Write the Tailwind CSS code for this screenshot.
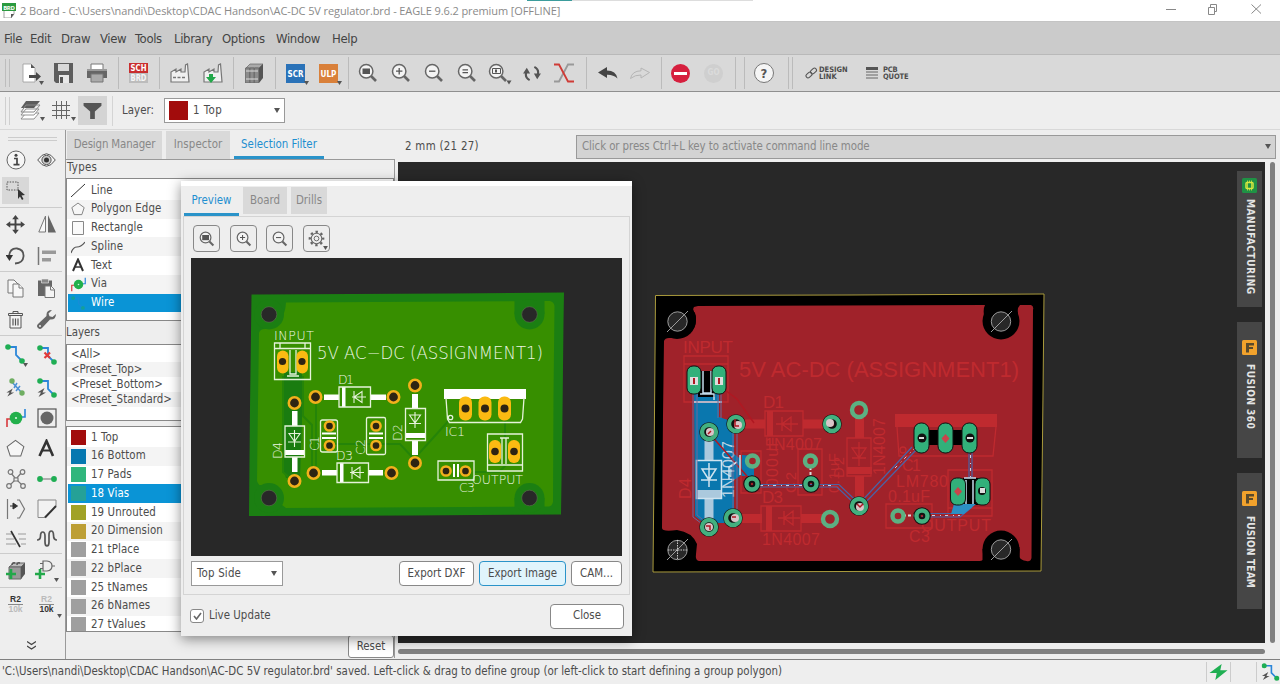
<!DOCTYPE html>
<html lang="en">
<head>
<meta charset="utf-8">
<title>2 Board - EAGLE</title>
<script src="https://cdn.jsdelivr.net/npm/@tailwindcss/browser@4"></script>
</head>
<body class="w-[1280px] h-[684px] overflow-hidden bg-[#eeeeee] font-['DejaVu_Sans_Condensed','DejaVu_Sans',sans-serif] text-[11.4px] leading-none tracking-[0.030px] text-[#4c4c4c]">

<!-- shared symbols -->
<svg class="hidden">
  <symbol id="mag" viewBox="0 0 20 20"><path d="M13 13l5 5" stroke="#666" stroke-width="2.6"/><circle cx="8.2" cy="8.2" r="6.7" fill="#f4f4f4" stroke="#666" stroke-width="1.5"/></symbol>
  <symbol id="dn" viewBox="0 0 6 5"><path d="M0 0h6L3 5z" fill="#555"/></symbol>
  <symbol id="polygon" viewBox="0 0 20 20"><path d="M10 1.5L18.8 8l-3.3 10h-11L1.2 8z" fill="#f6f6f6" stroke="#666" stroke-width="1.1"/></symbol>
  <symbol id="via" viewBox="0 0 20 20"><path d="M1 19v-8h5" fill="none" stroke="#d8383c" stroke-width="1.6"/><path d="M19 1v8h-5" fill="none" stroke="#2b86d9" stroke-width="1.6"/><circle cx="10" cy="10" r="6.300" fill="#22b04b"/><circle cx="10" cy="10" r="1.100" fill="#d7f5df"/></symbol>
  <symbol id="wire" viewBox="0 0 20 20"><path d="M3 3h8v8l6 6" fill="none" stroke="#2b86d9" stroke-width="1.8"/><circle cx="3" cy="3" r="2.8" fill="#1fae54"/><circle cx="17" cy="17" r="2.8" fill="#1fae54"/></symbol>
  <symbol id="bolt" viewBox="0 0 20 20"><path d="M15 1L1 10h7l-5 9 15-9h-7z" fill="#555"/></symbol>
</svg>

<div class="relative flex flex-col w-[1280px] h-[684px]">

  <!-- title bar -->
  <div class="relative h-[22px] shrink-0 bg-white border-b border-[#c4c4c4] flex items-center px-[2px] font-['Open_Sans','Noto_Sans',sans-serif] text-[11px] tracking-[-0.100px] text-[#8a8a8a]">
    <svg class="w-[14px] h-[16px] mb-[2px]" viewBox="0 0 14 16"><path d="M2 8h10v4l-3 4H2z" fill="#fff" stroke="#888" stroke-width=".8"/><path d="M9 16v-4h3z" fill="#555"/><rect width="14" height="8" y="1" fill="#2a9a3f"/><text x="1.2" y="7.6" font-size="6" font-weight="700" fill="#fff" textLength="11.6">BRD</text></svg>
    <span class="ml-[4px] whitespace-nowrap">2 Board - C:\Users\nandi\Desktop\CDAC Handson\AC-DC 5V regulator.brd - EAGLE 9.6.2 premium [OFFLINE]</span>
    <div class="absolute left-[527px] top-0 w-[45px] h-[1px] bg-[#3b9c9c]"></div>
    <div class="absolute left-[572px] top-0 w-[181px] h-[1px] bg-[#ddd]"></div>
    <svg class="ml-auto mr-[15px] mb-[3px] w-[98px] h-[14px]" viewBox="0 0 98 14" fill="none" stroke="#888"><path d="M1 7.500h10M43.500 5.500h6v7h-6zM45.500 5.500v-3h6v7h-2M86.500 2.500l9.500 9M96 2.500l-9.500 9"/></svg>
  </div>

  <!-- menu -->
  <div class="h-[33px] shrink-0 bg-[#cbcbcb] border-b border-[#b9b9b9] flex items-center pl-[4px] text-[13px] tracking-[-0.350px] text-[#444]">
    <span class="w-[26px]">File</span><span class="w-[31px]">Edit</span><span class="w-[39px]">Draw</span><span class="w-[35px]">View</span><span class="w-[39px]">Tools</span><span class="w-[48px]">Library</span><span class="w-[54px]">Options</span><span class="w-[56px]">Window</span><span>Help</span>
  </div>

  <!-- main toolbar -->
  <div class="h-[37px] shrink-0 bg-[#d9d9d9] border-b border-[#8f8f8f] flex items-center">
    <div class="ml-[5px] w-[5px] h-[28px] border-x border-[#bdbdbd]"></div>
    <div class="ml-[5px] h-[32px] w-[104px] border-r border-[#bbb] flex items-center">
      <div class="w-[33px] flex justify-center"><svg class="w-[26px] h-[24px]" viewBox="0 0 26 24"><path d="M4 3h8l4 4v14H4z" fill="#fff" stroke="#999" stroke-width=".8"/><path d="M12 3l4 4h-4z" fill="#555"/><path d="M10 14h7v-3l5 4.500-5 4.500v-3h-7z" fill="#4a4a4a"/><path d="M20 20h5l-2.500 4z" fill="#555"/></svg></div>
      <div class="w-[32px] flex justify-center"><svg class="w-[20px] h-[20px]" viewBox="0 0 20 20"><path d="M0 0h19v20H2l-2-2z" fill="#5d5d5d"/><path d="M4 1h11v7H4z" fill="#d9d9d9"/><path d="M5 12h10v8H5z" fill="#e8e8e8"/><path d="M6 14h3v6H6z" fill="#555"/></svg></div>
      <div class="w-[33px] flex justify-center"><svg class="w-[20px] h-[20px]" viewBox="0 0 20 20"><path d="M4 1h12v6H4z" fill="#fff" stroke="#777"/><path d="M0 7h20v8H0z" fill="#666"/><path d="M0 6h20v2H0z" fill="#999"/><path d="M4 11h12v8H4z" fill="#aaa" stroke="#777"/></svg></div>
    </div>
    <div class="h-[32px] w-[41px] border-r border-[#bbb] flex items-center justify-center pr-px"><svg class="w-[19px] h-[20px]" viewBox="0 0 19 20"><rect width="19" height="10" fill="#c92e2e"/><rect y="10" width="19" height="10" fill="#bcbcbc"/><text x="1.500" y="8.300" font-size="8.500" font-weight="700" fill="#fff" textLength="16" lengthAdjust="spacingAndGlyphs">SCH</text><text x="1.500" y="18.300" font-size="8.500" font-weight="700" fill="#f5f5f5" textLength="16" lengthAdjust="spacingAndGlyphs">BRD</text></svg></div>
    <div class="h-[32px] w-[74px] border-r border-[#bbb] flex items-center pl-[3px]">
      <div class="w-[33px] flex justify-center"><svg class="w-[20px] h-[20px]" viewBox="0 0 20 20"><path d="M1 19V9l5-3v3l5-3v3h4l.5-7 2-1 1.500 18z" fill="#f0f0f0" stroke="#777" stroke-width="1.200"/><path d="M3 14.500h13" stroke="#777" stroke-width="1.500" stroke-dasharray="3 1.500"/></svg></div>
      <div class="w-[33px] flex justify-center"><svg class="w-[20px] h-[20px]" viewBox="0 0 20 20"><path d="M1 19V9l5-3v3l5-3v3h4l.5-7 2-1 1.500 18z" fill="#f0f0f0" stroke="#777" stroke-width="1.200"/><path d="M6 11h4v3h3l-5 6-5-6h3z" fill="#22a84a"/></svg></div>
    </div>
    <div class="h-[32px] w-[42px] border-r border-[#bbb] flex items-center justify-center pr-[2px]"><svg class="w-[18px] h-[20px]" viewBox="0 0 18 20"><path d="M1 5l4-4h13l-4 4z" fill="#aaa" stroke="#666" stroke-width=".7"/><path d="M14 5l4-4v14l-4 5z" fill="#555"/><path d="M.500 5h4v15h-4zM5 5h4v15H5zM9.500 5h4v15h-4z" fill="#8c8c8c" stroke="#666" stroke-width=".8"/><path d="M1 8h12M1 16h12" stroke="#ddd"/></svg></div>
    <div class="h-[32px] w-[73px] border-r border-[#bbb] flex items-center pl-[3px]">
      <div class="w-[34px] flex justify-center"><svg class="w-[26px] h-[24px]" viewBox="0 0 26 24"><rect x="3" y="3" width="19" height="19" fill="#2a72b8"/><text x="4.500" y="16" font-size="9.500" font-weight="700" fill="#fff" textLength="16" lengthAdjust="spacingAndGlyphs">SCR</text><path d="M21 20h5l-2.500 4z" fill="#555"/></svg></div>
      <div class="w-[32px] flex justify-center"><svg class="w-[26px] h-[24px]" viewBox="0 0 26 24"><rect x="3" y="3" width="19" height="19" fill="#d9803a"/><text x="4.500" y="16" font-size="9.500" font-weight="700" fill="#fff" textLength="16" lengthAdjust="spacingAndGlyphs">ULP</text><path d="M21 20h5l-2.500 4z" fill="#555"/></svg></div>
    </div>
    <div class="h-[32px] w-[238px] border-r border-[#bbb] flex items-center pl-[3px]">
      <div class="w-[32.800px] flex justify-center"><svg class="w-[20px] h-[20px]" viewBox="0 0 20 20"><use href="#mag"/><path d="M4.500 5.500h7.500v5.500H4.500z" fill="#555"/></svg></div>
      <div class="w-[32.800px] flex justify-center"><svg class="w-[20px] h-[20px]" viewBox="0 0 20 20"><use href="#mag"/><path d="M5 8.200h6.400M8.200 5v6.400" stroke="#555" stroke-width="1.300"/></svg></div>
      <div class="w-[32.800px] flex justify-center"><svg class="w-[20px] h-[20px]" viewBox="0 0 20 20"><use href="#mag"/><path d="M5 8.200h6.400" stroke="#555" stroke-width="1.300"/></svg></div>
      <div class="w-[32.800px] flex justify-center"><svg class="w-[20px] h-[20px]" viewBox="0 0 20 20"><use href="#mag"/><path d="M5.500 6.800h5.500M5.500 9.600h5.500" stroke="#555" stroke-width="1.300"/></svg></div>
      <div class="w-[32.800px] flex justify-center"><svg class="w-[25px] h-[23px]" viewBox="0 0 25 23"><use href="#mag" x="1" y="1" width="20" height="20"/><path d="M5.500 6.500h8v5h-8z" fill="none" stroke="#555"/><path d="M8 7.500h2v3H8z" fill="#555"/><path d="M19.500 18.500h5l-2.500 4z" fill="#555"/></svg></div>
      <div class="w-[32px] flex justify-center"><svg class="w-[18px] h-[17px]" viewBox="0 0 19 18" fill="none" stroke="#555" stroke-width="2.200"><path d="M7 16Q1 13 4 6M12 2q6 3 3 10M4 3"/><path d="M0 9l4-6 3.500 6zM19 9l-4 6-3.500-6z" fill="#555" stroke="none"/></svg></div>
      <div class="w-[32px] flex justify-center"><svg class="w-[20px] h-[20px]" viewBox="0 0 20 20" fill="none" stroke-width="1.800"><path d="M0 18.500h5L14 1.500h6" stroke="#999"/><path d="M0 1.500h5L14 18.500h6" stroke="#cf3b36"/></svg></div>
    </div>
    <div class="h-[32px] w-[75px] border-r border-[#bbb] flex items-center pl-[4px]">
      <div class="w-[33px] flex justify-center"><svg class="w-[20px] h-[13px]" viewBox="0 0 20 13"><path d="M0 5.500L9 0v3.500q9 0 10.500 8Q15 7.500 9 7.800V11z" fill="#444"/></svg></div>
      <div class="w-[32px] flex justify-center"><svg class="w-[20px] h-[13px]" viewBox="0 0 20 13"><path d="M19.500 5.500L11 1v2.800Q2 4 .500 11.500 5 7.800 11 8v3z" fill="none" stroke="#b5b5b5"/></svg></div>
    </div>
    <div class="h-[32px] w-[74px] border-r border-[#bbb] flex items-center pl-[2px]">
      <div class="w-[33px] flex justify-center"><div class="size-[19px] rounded-full bg-[#d61f3e] flex items-center justify-center"><div class="w-[13px] h-[3px] bg-white"></div></div></div>
      <div class="w-[33px] flex justify-center"><div class="size-[19px] rounded-full bg-[#cfcfcf] flex items-center justify-center text-[8px] font-bold text-[#dbdbdb]">GO</div></div>
    </div>
    <div class="ml-[8px] h-[32px] w-[45px] border-x border-[#bbb] flex items-center pl-[9px]"><div class="size-[20px] rounded-full border border-[#777] bg-[#f5f5f5] flex items-center justify-center text-[13px] font-bold text-[#555]">?</div></div>
    <div class="ml-[3px] h-[32px] w-px bg-[#bbb]"></div>
    <svg class="ml-[12px] w-[13px] h-[12px]" viewBox="0 0 13 12" fill="none" stroke="#555" stroke-width="1.100"><rect x="-3.300" y="-2" width="6.600" height="4" rx="2" transform="translate(4 8) rotate(-42)"/><rect x="-3.300" y="-2" width="6.600" height="4" rx="2" transform="translate(8.500 4) rotate(-42)"/></svg>
    <div class="ml-[1px] w-[47px] text-[7.500px] leading-[7px] font-bold text-[#4c4c4c] tracking-[0px]">DESIGN<br>LINK</div>
    <svg class="w-[12px] h-[12px]" viewBox="0 0 12 12"><path d="M0 0h12v3H0z" fill="#555"/><path d="M0 5h12M0 8h12M0 11h12" stroke="#666"/></svg>
    <div class="ml-[5px] text-[7.500px] leading-[7px] font-bold text-[#4c4c4c] tracking-[-0.150px]">PCB<br>QUOTE</div>
  </div>

  <!-- layer toolbar -->
  <div class="h-[38px] shrink-0 bg-[#eeeeee] border-b border-[#d8d8d8] flex items-center">
    <div class="ml-[5px] w-[5px] h-[28px] border-x border-[#cfcfcf]"></div>
    <svg class="ml-[10px] w-[27px] h-[24px]" viewBox="0 0 27 24"><g fill="#fff" stroke="#888" stroke-width=".9"><path d="M6 14h13l-5 6H1z"/><path d="M6 10h13l-5 6H1z"/></g><path d="M6 2h14l-6 7H1z" fill="#5c5c5c"/><path d="M6 6h14l-6 7H1z" fill="none" stroke="#888"/><path d="M20 18h5l-2.500 4z" fill="#555"/></svg>
    <svg class="ml-[4px] w-[25px] h-[24px]" viewBox="0 0 25 24"><path d="M1 6.500h18M1 11.500h18M1 16.500h18M5.500 2v18M10.500 2v18M15.500 2v18" stroke="#666"/><path d="M20 18h5l-2.500 4z" fill="#555"/></svg>
    <div class="ml-[2px] w-[29px] h-[29px] bg-[#d4d4d4] flex items-center justify-center"><svg class="w-[19px] h-[16px]" viewBox="0 0 19 17"><path d="M0 0h19v3l-7 6v8H7V9L0 3z" fill="#555"/></svg></div>
    <div class="ml-[5px] h-[30px] w-px bg-[#d4d4d4]"></div>
    <span class="ml-[9px] w-[42px]">Layer:</span>
    <div class="w-[121px] h-[25px] bg-white border border-[#999] flex items-center pl-[4px] pr-[4px]"><div class="size-[19px] bg-[#a20c0c]"></div><span class="ml-[5px] tracking-[0.450px]">1 Top</span><svg class="ml-auto w-[6px] h-[5px]"><use href="#dn"/></svg></div>
  </div>

  <!-- work area -->
  <div class="h-[529px] shrink-0 flex">

    <!-- tool palette -->
    <div class="w-[65px] shrink-0 flex flex-col bg-[#eeeeee]">
      <div class="mt-[7px] ml-[8px] w-[49px] h-[4px] border-y border-[#ccc] mb-[5px]"></div>
      <div class="grid grid-cols-2 w-[62px] h-[62px] pt-px place-items-center border-b border-[#ccc]">
        <svg class="w-[20px] h-[20px]" viewBox="0 0 20 20"><circle cx="10" cy="10" r="9" fill="#f6f6f6" stroke="#666"/><path d="M8 8.500h3v6M7.500 14.700h6" stroke="#444" stroke-width="1.700" fill="none"/><circle cx="10" cy="5.200" r="1.500" fill="#444"/></svg>
        <svg class="w-[19px] h-[14px]" viewBox="0 0 19 14"><path d="M.7 7Q9.500-5.500 18.300 7 9.500 19.500.7 7z" fill="#f4f4f4" stroke="#555"/><circle cx="9.500" cy="7" r="4.600" fill="#ccc" stroke="#555"/><circle cx="9.500" cy="7" r="2.500" fill="#333"/></svg>
        <div class="size-[27px] bg-[#d8d8d8] flex items-center justify-center"><svg class="w-[19px] h-[20px]" viewBox="0 0 19 20"><path d="M1 2h11v8H1z" fill="none" stroke="#555" stroke-dasharray="1.500 1.200"/><path d="M12 9l7 6-3.500.5 2 3.500-1.500 1-2-3.500-2 2.500z" fill="#333"/></svg></div>
      </div>
      <div class="grid grid-cols-2 w-[62px] h-[64px] place-items-center border-b border-[#ccc]">
        <svg class="w-[19px] h-[19px]" viewBox="0 0 20 20"><path d="M10 0l3.500 4.500H11V9h4.500V6.500L20 10l-4.500 3.500V11H11v4.500h2.500L10 20l-3.500-4.500H9V11H4.500v2.500L0 10l4.500-3.500V9H9V4.500H6.500z" fill="#444"/></svg>
        <svg class="w-[18px] h-[18px]" viewBox="0 0 18 18"><path d="M7.500 1v16H.8z" fill="#f8f8f8" stroke="#777"/><path d="M10 0v17.500h8z" fill="#666"/></svg>
        <svg class="w-[19px] h-[18px]" viewBox="0 0 19 18"><path d="M3 9Q4 1 11 1.500q7 1 6.500 8Q17 16 9 16.500" fill="none" stroke="#555" stroke-width="1.800"/><path d="M-.5 8h7.500L3.500 14z" fill="#333"/></svg>
        <svg class="w-[20px] h-[18px]" viewBox="0 0 20 18"><path d="M1.500 0v18" stroke="#777" stroke-width="1.500"/><path d="M5 3.500h14v3.500H5zM5 11h9v3.500H5z" fill="#999"/></svg>
      </div>
      <div class="grid grid-cols-2 w-[62px] h-[64px] pt-px place-items-center border-b border-[#ccc]">
        <svg class="w-[17px] h-[19px]" viewBox="0 0 17 19" fill="#f7f7f7" stroke="#777"><path d="M1 1h6l4 4v9H1z"/><path d="M6 5h6l4 4v9H6z"/><path d="M12 5v4h4"/></svg>
        <svg class="w-[17px] h-[19px]" viewBox="0 0 17 19"><path d="M0 1.500h14V17H0z" fill="#666"/><path d="M3.500 0h7v4h-7z" fill="#888" stroke="#eee" stroke-width=".6"/><path d="M7 7h6l3.500 3.500V18.500H7z" fill="#f4f4f4" stroke="#777"/><path d="M12.500 7v4h4" fill="none" stroke="#777"/></svg>
        <svg class="w-[15px] h-[18px]" viewBox="0 0 15 18" fill="none" stroke="#555"><path d="M.5 4.500v-2h14v2zM5 2V.500h5V2"/><path d="M2 5v12h11V5" fill="#f4f4f4"/><path d="M5 7.500v7M7.500 7.500v7M10 7.500v7" stroke-width="1.200"/></svg>
        <svg class="w-[19px] h-[19px]" viewBox="0 0 19 19"><path d="M15 0q-6 0-5.500 6L1 14q-2 2 0 4t4 0l8-8.500q6 .5 6-5.500l-3.500 3-3-.8L11.500 3.500z" fill="#666"/><circle cx="3" cy="16" r="1" fill="#eee"/></svg>
      </div>
      <div class="grid grid-cols-2 w-[62px] h-[218px] pt-[2px] place-items-center border-b border-[#ccc]">
        <svg class="w-[24px] h-[24px]" viewBox="0 0 24 24"><use href="#wire" x="1" y="1" width="20" height="20"/><path d="M19 20h5l-2.500 4z" fill="#555"/></svg>
        <svg class="w-[20px] h-[20px]" viewBox="0 0 20 20"><use href="#wire"/><path d="M7.500 7.500l5.500 5.500M13 7.500L7.500 13" stroke="#e03a3a" stroke-width="2.200"/></svg>
        <svg class="w-[20px] h-[20px]" viewBox="0 0 20 20"><path d="M5 3l11 12M11 5l-3 5M14 8l-4 5" stroke="#4b8fd4" stroke-width="1.500"/><circle cx="6" cy="3" r="2.700" fill="#6fae62"/><circle cx="16" cy="15" r="2.700" fill="#6fae62"/><use href="#bolt" x="0" y="9" width="9" height="11"/></svg>
        <svg class="w-[20px] h-[20px]" viewBox="0 0 20 20"><use href="#wire"/><use href="#bolt" x="0" y="9" width="10" height="11"/></svg>
        <svg class="w-[20px] h-[20px]"><use href="#via"/></svg>
        <svg class="w-[20px] h-[20px]" viewBox="0 0 20 20"><rect x="1" y="1" width="18" height="18" fill="#eee" stroke="#555" stroke-width="1.200"/><circle cx="10" cy="10" r="6.500" fill="#666"/></svg>
        <svg class="w-[19px] h-[19px]"><use href="#polygon"/></svg>
        <svg class="w-[17px] h-[18px]" viewBox="0 0 17 18" fill="none" stroke="#333"><path d="M1.500 17L8.500 2l6.500 15" stroke-width="2.600"/><path d="M4 11.500h9" stroke-width="2"/></svg>
        <svg class="w-[20px] h-[20px]" viewBox="0 0 20 20" fill="#eee" stroke="#777" stroke-width="1.200"><path d="M4 3l6 7 6-7M3 17l7-7 7 7" fill="none"/><circle cx="4.500" cy="3" r="2.300"/><circle cx="16.500" cy="3" r="2.300"/><circle cx="3" cy="17" r="2.300"/><circle cx="17" cy="17" r="2.300"/><path d="M8 9h4v3H8z"/></svg>
        <svg class="w-[20px] h-[6px]" viewBox="0 0 20 6"><path d="M3 3h14" stroke="#999" stroke-width="1.500"/><circle cx="3" cy="3" r="2.900" fill="#1fae54"/><circle cx="17" cy="3" r="2.900" fill="#1fae54"/></svg>
        <svg class="w-[20px] h-[20px]" viewBox="0 0 20 20"><path d="M1.500 0v20M11 1h2.500l5 9-5 9H11" fill="none" stroke="#777" stroke-width="1.200"/><path d="M4 7h5M7 4l4.500 3L7 10z" fill="#333" stroke="#333"/></svg>
        <svg class="w-[20px] h-[20px]" viewBox="0 0 20 20"><path d="M1 1h18v6L8 18.500H1z" fill="#f2f2f2" stroke="#888"/><path d="M19 7L8 18.500" stroke="#333" stroke-width="2"/></svg>
        <svg class="w-[20px] h-[18px]" viewBox="0 0 20 18"><path d="M0 4h7M12 4h8M0 9h8M13 9h7M0 14h10M15 14h5" stroke="#999" stroke-width="1.200"/><path d="M5 1l9 16" stroke="#333" stroke-width="1.700"/></svg>
        <svg class="w-[20px] h-[18px]" viewBox="0 0 20 18"><path d="M0 10q3.500 0 3.500-4t2.200-4T8 6v6q0 4 2 4t2-4V5q0-4 2.200-4t2.300 4q0 5 3.500 5" fill="none" stroke="#555" stroke-width="1.700"/></svg>
      </div>
      <div class="grid grid-cols-2 w-[62px] h-[34px] place-items-center border-b border-[#ccc]">
        <svg class="w-[20px] h-[20px]" viewBox="0 0 20 20"><path d="M3 6l5-4h11l-4 4z" fill="#bbb" stroke="#666"/><path d="M3 6h12v12H3z" fill="#999" stroke="#666"/><path d="M15 6l4-4v11l-4 5z" fill="#555"/><path d="M6 4q0-3 3-2M11 4q0-3 3-2" fill="none" stroke="#555" stroke-width="1.500"/><path d="M0 13h10M5 8v10" stroke="#22a84a" stroke-width="2.600"/></svg>
        <svg class="w-[24px] h-[22px]" viewBox="0 0 24 22"><path d="M8 1h4q5 .5 5 5t-5 5H8zM5 3.500h3M5 8.500h3M17 6h3" fill="none" stroke="#666" stroke-width="1.200"/><path d="M0 14h10M5 9v10" stroke="#22a84a" stroke-width="2.600"/><path d="M19 18h5l-2.500 4z" fill="#555"/></svg>
      </div>
      <div class="grid grid-cols-2 w-[62px] h-[32px] place-items-center font-['Liberation_Sans',sans-serif] text-[8.500px] font-bold text-[#333] leading-[9px] text-center tracking-normal">
        <div>R2<div class="border-t border-[#888] text-[#bbb]">10k</div></div>
        <div class="relative"><div class="text-[#bbb] border-b border-[#888]">R2</div>10k<svg class="absolute -right-[8px] -bottom-[4px] w-[5px] h-[4px]"><use href="#dn"/></svg></div>
      </div>
      <svg class="mt-[21px] ml-[27px] w-[9px] h-[9px]" viewBox="0 0 9 9" fill="none" stroke="#444" stroke-width="1.200"><path d="M0 .500l4.500 3L9 .500M0 5l4.500 3L9 5"/></svg>
    </div>

    <!-- side panel -->
    <div class="w-[330px] shrink-0 flex flex-col border-l border-[#9a9a9a]">
      <div class="h-[29px] flex items-end text-[#888] tracking-[-0.150px]">
        <div class="ml-[1px] w-[95px] h-[28px] bg-[#d9d9d9] flex items-center justify-center">Design Manager</div>
        <div class="ml-[4px] w-[64px] h-[28px] bg-[#d9d9d9] flex items-center justify-center tracking-[0.100px]">Inspector</div>
        <div class="ml-[4px] w-[90px] h-[29px] border-b-[3px] border-[#2a93c9] pt-[4px] flex items-center justify-center text-[#1e8fd0] tracking-[0px]">Selection Filter</div>
      </div>
      <div class="h-[499px] border-t border-r border-[#999] flex flex-col">
        <div class="h-[18px] flex items-center pb-[2px] pl-px tracking-[0.300px]">Types</div>
        <div class="h-[143px] border border-[#888] bg-white pt-[2px] tracking-[0.100px]">
          <div class="h-[18.750px] flex items-center pl-[4px]"><svg class="w-[14px] h-[14px] mr-[6px]" viewBox="0 0 14 14"><path d="M0 14L14 1" stroke="#333"/></svg>Line</div>
          <div class="h-[18.750px] flex items-center pl-[4px] bg-[#f4f4f4]"><svg class="w-[14px] h-[14px] mr-[6px]"><use href="#polygon"/></svg>Polygon Edge</div>
          <div class="h-[18.750px] flex items-center pl-[4px]"><svg class="w-[14px] h-[14px] mr-[6px]" viewBox="0 0 14 14"><path d="M1.500.500h11v13h-11z" fill="#fafafa" stroke="#888"/></svg>Rectangle</div>
          <div class="h-[18.750px] flex items-center pl-[4px] bg-[#f4f4f4]"><svg class="w-[14px] h-[14px] mr-[6px]" viewBox="0 0 14 14"><path d="M0 13Q2 7 6 7t8-5" fill="none" stroke="#555" stroke-width="1.200"/></svg>Spline</div>
          <div class="h-[18.750px] flex items-center pl-[4px]"><svg class="w-[14px] h-[14px] mr-[6px]" viewBox="0 0 14 14" fill="none" stroke="#333"><path d="M2 13L7 1.500 12 13" stroke-width="2"/><path d="M4 9h6" stroke-width="1.500"/></svg>Text</div>
          <div class="h-[18.750px] flex items-center pl-[4px] bg-[#f4f4f4]"><svg class="w-[15px] h-[15px] mr-[5px]"><use href="#via"/></svg>Via</div>
          <div class="h-[18.750px] flex items-center ml-[1px] pl-[3px] bg-[#0a94d6] text-white"><svg class="w-[14px] h-[14px] mr-[6px] opacity-45"><use href="#wire"/></svg>Wire</div>
        </div>
        <div class="h-[23px] flex items-center tracking-[0px]">Layers</div>
        <div class="h-[77px] border border-[#888] bg-white pt-[2px] tracking-[0px]">
          <div class="h-[15px] flex items-center pl-[4px]">&lt;All&gt;</div>
          <div class="h-[15px] flex items-center pl-[4px] bg-[#f4f4f4]">&lt;Preset_Top&gt;</div>
          <div class="h-[15px] flex items-center pl-[4px]">&lt;Preset_Bottom&gt;</div>
          <div class="h-[15px] flex items-center pl-[4px] bg-[#f4f4f4]">&lt;Preset_Standard&gt;</div>
        </div>
        <div class="mt-[5px] h-[206px] shrink-0 overflow-hidden border border-[#888] bg-white pt-px tracking-[0.100px]">
          <div class="h-[18.750px] flex items-center pl-[4px]"><i class="size-[15px] mr-[5px] bg-[#a20c0c]"></i>1 Top</div>
          <div class="h-[18.750px] flex items-center pl-[4px] bg-[#f4f4f4]"><i class="size-[15px] mr-[5px] bg-[#0678b0]"></i>16 Bottom</div>
          <div class="h-[18.750px] flex items-center pl-[4px]"><i class="size-[15px] mr-[5px] bg-[#30b67c]"></i>17 Pads</div>
          <div class="h-[18.750px] flex items-center ml-[1px] pl-[3px] bg-[#0a94d6] text-white"><i class="size-[15px] mr-[5px] bg-[#25a197]"></i>18 Vias</div>
          <div class="h-[18.750px] flex items-center pl-[4px]"><i class="size-[15px] mr-[5px] bg-[#a1a226]"></i>19 Unrouted</div>
          <div class="h-[18.750px] flex items-center pl-[4px] bg-[#f4f4f4]"><i class="size-[15px] mr-[5px] bg-[#bd9f35]"></i>20 Dimension</div>
          <div class="h-[18.750px] flex items-center pl-[4px]"><i class="size-[15px] mr-[5px] bg-[#9f9f9f]"></i>21 tPlace</div>
          <div class="h-[18.750px] flex items-center pl-[4px] bg-[#f4f4f4]"><i class="size-[15px] mr-[5px] bg-[#9f9f9f]"></i>22 bPlace</div>
          <div class="h-[18.750px] flex items-center pl-[4px]"><i class="size-[15px] mr-[5px] bg-[#9f9f9f]"></i>25 tNames</div>
          <div class="h-[18.750px] flex items-center pl-[4px] bg-[#f4f4f4]"><i class="size-[15px] mr-[5px] bg-[#9f9f9f]"></i>26 bNames</div>
          <div class="h-[18.750px] flex items-center pl-[4px]"><i class="size-[15px] mr-[5px] bg-[#9f9f9f]"></i>27 tValues</div>
        </div>
        <div class="mt-[3px] ml-auto w-[46px] h-[23px] shrink-0 rounded-[3px] border border-[#888] bg-white flex items-center justify-center">Reset</div>
      </div>
    </div>

    <!-- canvas column -->
    <div class="ml-[3px] w-[882px] shrink-0 flex flex-col">
      <div class="h-[32px] flex items-center pl-[7px] pr-[4px] pt-[2px]">
        <span class="w-[171px] tracking-[0.300px]">2 mm (21 27)</span>
        <div class="w-[700px] h-[24px] shrink-0 border border-[#999] bg-[#d3d3d3] flex items-center justify-between pl-[5px] pr-[4px] text-[#888] tracking-[-0.090px] mb-px">Click or press Ctrl+L key to activate command line mode<svg class="w-[6px] h-[5px]"><use href="#dn"/></svg></div>
      </div>
      <div class="flex h-[481px]">
        <div class="relative w-[867px] h-[481px] bg-[#282828]">
          <svg class="block w-[867px] h-[481px]" viewBox="398 162 867 481" font-family="Liberation Sans, Arial, sans-serif" letter-spacing="0">
            <path d="M655.500 295.500L850 295l194-1-1 100-2 177-200 .500-188 .500 1-100z" fill="#000" stroke="#a99a3c"/>
            <path d="M698 306L985 305q-2 4-1 10v10h34v-12q-1-5 2-8h11q3 1 2 5l-1 150-.5 98q-1 4-5 3-6-1-7-4v-10h-35v10q-1 4-5 4H699q-4-1-3-7l1-10q-5-12-20-14-15 2-15-2l1-113 1-74q1-3 5-3 20 1 26-12 2-8 0-13-3-3-1-6z" fill="#a0222a"/>
            <g fill="#000"><circle cx="1001" cy="321" r="18.500"/><circle cx="1001" cy="549" r="18.500"/><path d="M982.500 549h37v13h-37z"/><circle cx="677" cy="320" r="19"/><circle cx="677" cy="551" r="19"/></g>
            <g fill="#282828" stroke="#aaa" stroke-width=".9"><circle cx="677.500" cy="321.500" r="9.700"/><circle cx="1001" cy="321.500" r="9.700"/><circle cx="677.500" cy="550" r="9.700"/><circle cx="1001" cy="549.500" r="9.700"/><path d="M667 332l21-21M991 332l21-21M667 560l21-21M991 560l21-21"/><path d="M668 550h19M677.500 540v20" stroke="#ddd" stroke-dasharray="1.500 1"/></g>

            <!-- bottom copper -->
            <path d="M694 392h25v25l9 3 6 6v28l8 6v-5l12 1v20H740l-6 4v37l-8 6h-22l-9-7z" fill="#0a77ae"/>
            <g fill="#bf2a2f">
              <text x="683" y="353" font-size="17" textLength="50">INPUT</text>
              <text x="739" y="377" font-size="22" textLength="280">5V AC-DC (ASSIGNMENT1)</text>
              <text x="763" y="408" font-size="17" textLength="21">D1</text>
              <text x="765" y="450" font-size="16" textLength="57">1N4007</text>
              <text x="762" y="503" font-size="17" textLength="21">D3</text>
              <text x="762" y="545" font-size="16" textLength="58">1N4007</text>
              <text x="902" y="471" font-size="16" textLength="19">C1</text>
              <text x="896" y="487" font-size="16" textLength="52">LM780</text>
              <text x="888" y="502" font-size="16" textLength="42">0.1uF</text>
              <text x="909" y="542" font-size="16" textLength="21">C3</text>
              <text x="921" y="531" font-size="16" textLength="70">OUTPUT</text>
              <text transform="translate(885 475) rotate(-90)" font-size="16" textLength="57">1N4007</text>
              <text transform="translate(691 499) rotate(-90)" font-size="16" textLength="21">D4</text>
              <text transform="translate(778 487) rotate(-90)" font-size="16" textLength="50">000uF</text>
              <text transform="translate(796 493) rotate(-90)" font-size="15" textLength="21">C2</text>
              <text transform="translate(839 493) rotate(-90)" font-size="15" textLength="40">0.1uF</text>
              <text transform="translate(844 478) rotate(-90)" font-size="15" textLength="21">D2</text>
            </g>
            <text transform="translate(734 498) rotate(-90)" font-size="16" textLength="57" fill="#b9d3e4">1N4007</text>

            <!-- top placement outlines -->
            <g fill="none" stroke="#bf2a2f" stroke-width="1.300">
              <path d="M684 356h44v46h-44zM684 364h44M765 411h38v25h-38zM761 506h40v25h-40zM847 438h24v38h-24zM741 451h20v42h-20zM798 449h24v46h-24zM886 504h46v24h-46zM948 470h44v46h-44zM948 508h44M897 427l2 29h94l3-29"/>
              <path d="M776 424h22M791 417v14l-9-7zM782 417v14M778 518h22M793 511v14l-9-7zM784 511v14M859 442v24M852 448h14l-7 10zM852 458h14"/>
              <circle cx="903" cy="450" r="3"/>
            </g>
            <g fill="#bf2a2f"><path d="M895 414h102v13H895zM744 419.500h21v9h-21zM803 419.500h21v9h-21zM767 411h6v25h-6zM740 514h22v9h-22zM801 514h22v9h-22zM766 506h6v25h-6zM855 418h9v20h-9zM855 476h9v22h-9zM847 467h25v7h-25z"/></g>
            <path d="M725 390l12 9 17 24M709 433l44 50" stroke="#b01822" stroke-width="1.500" fill="none"/>

            <!-- D4 and input connector on the bottom layer -->
            <g fill="#abc9dd"><path d="M704.500 439h9v21h-9zM704.500 498h9v23h-9zM696 490h26v8h-26z"/></g>
            <path d="M696.500 460.500h25v38h-25zM709 463v24M702 469h14l-7 11zM701 480h16M740 455v20M737 462l-8 5v12" fill="none" stroke="#cfe3ef" stroke-width="1.500"/>
            <path d="M698 371h17v26h-17z"/><path d="M703 371v22h8v-22M694 402h28M700 394h14v6" fill="none" stroke="#c4dcec" stroke-width="1.500"/>

            <!-- routed traces -->
            <g fill="none" stroke="#4a63a6" stroke-width="1.200">
              <path d="M693 392v125l13 10M697 392v123l10 8M718 394v24M721 394v24M733 432v84M737 432v84" stroke="#6a6a9a" stroke-width="1"/>
              <path d="M753 484.500h86l22 21M753 487h84l20 19M859 504l53-57M863 505l54-56M969 450v34M972 450v34M922 513.500h36l18-16M922 517h38l12-10"/>
            </g>
            <path d="M760 485.500h45M815 485.500h20M895 468l22-22M970.500 455v26M932 515.500h28" fill="none" stroke="#cdd2e0" stroke-dasharray="3 5 1 4"/>
            <path d="M898 515.500h24M810.500 462v20" stroke="#ddd" stroke-width="2" stroke-dasharray="3 2"/>

            <!-- pads -->
            <g fill="#000"><path d="M925 430h42v15h-42zM963 478h16v27h-16z"/></g>
            <path d="M966 480v25h7v-25M964 478h12" stroke="#c4dcec" stroke-width="1.500" fill="none"/>
            <path d="M954 504h22l-12 10h-13z" fill="#2c8fc4"/>
            <g stroke="#101010"><g fill="#32b07a">
              <rect x="687" y="366" width="14" height="28" rx="6"/><rect x="712" y="366" width="14" height="28" rx="6"/>
              <rect x="914" y="423" width="15" height="30" rx="7"/><rect x="938" y="423" width="15" height="30" rx="7"/><rect x="962" y="423" width="15" height="30" rx="7"/>
              <rect x="950.500" y="478" width="15" height="27" rx="6"/><rect x="975" y="478" width="15" height="27" rx="6"/></g></g>
            <g fill="#111"><circle cx="922" cy="438" r="4.500"/><circle cx="970" cy="438" r="4.500"/><circle cx="982" cy="491" r="4"/></g>
            <g fill="#c9444b"><path d="M945.500 434l4 4.500-4 4.500-4-4.500zM958 487l4 4.500-4 4.500-4-4.500z"/></g>
            <g fill="#ddd"><path d="M690 377h8v8h-8zM715 377h8v8h-8zM919 437h5v2h-5zM967 437h6v2h-6zM980 488h5v5h-5z"/></g>
            <path d="M694 378v6M719 378v6" stroke="#b01822" stroke-width="2"/>
            <g fill="none" stroke="#111" stroke-width="7.500"><circle cx="709" cy="432" r="6"/><circle cx="736" cy="424" r="6"/><circle cx="832" cy="424" r="6"/><circle cx="859" cy="506" r="6"/><circle cx="709" cy="527" r="6"/><circle cx="733" cy="518" r="6"/><circle cx="752" cy="484" r="5"/><circle cx="811" cy="484" r="5"/><circle cx="922" cy="516" r="5"/></g>
            <g fill="none" stroke="#43b07f" stroke-width="4.400"><circle cx="709" cy="432" r="7"/><circle cx="736" cy="424" r="7"/><circle cx="832" cy="424" r="7"/><circle cx="859" cy="506" r="7"/><circle cx="709" cy="527" r="7"/><circle cx="733" cy="518" r="7"/><circle cx="752" cy="484" r="5.500"/><circle cx="811" cy="484" r="5.500"/><circle cx="922" cy="516" r="5.500"/></g>
            <g fill="#a0222a" stroke="#5cb082" stroke-width="4.400"><circle cx="859" cy="410" r="7"/><circle cx="830" cy="519" r="7"/><circle cx="752.500" cy="461" r="5.500"/><circle cx="810.500" cy="461" r="5.500"/><circle cx="898" cy="516" r="5.500"/></g>
            <g fill="#d9c5c8"><circle cx="710" cy="432" r="4"/><circle cx="738" cy="425" r="4"/><circle cx="830" cy="423" r="4"/><circle cx="860" cy="507" r="4"/><circle cx="709" cy="527" r="4"/><circle cx="735" cy="518" r="4"/></g>
            <path d="M708 434l3-3M735 419v7h4M857 504l3 3 3-3M706 526h4v4M732 517h4" fill="none" stroke="#b01822" stroke-width="1.500"/>
          </svg>

          <!-- side tabs -->
          <div class="absolute right-[3px] top-[9px] flex flex-col gap-[15px]">
            <div class="w-[25px] h-[136px] bg-[#464646] flex flex-col items-center pt-[7px]">
              <svg class="w-[15px] h-[15px] shrink-0" viewBox="0 0 15 15"><rect width="15" height="15" rx="1.500" fill="#1f9245"/><rect x="4" y="4.500" width="7" height="6" rx="1" fill="none" stroke="#d9e840" stroke-width="1.500"/><path d="M5.500 2.500v10M7.500 2.500v2M7.500 10.500v2M9.500 2.500v10" stroke="#d9e840" stroke-width=".8"/></svg>
              <span class="mt-[6px] [writing-mode:vertical-rl] whitespace-nowrap font-bold text-[10px] tracking-[0.600px] text-[#e4e4e4]">MANUFACTURING</span>
            </div>
            <div class="w-[25px] h-[136px] bg-[#464646] flex flex-col items-center pt-[18px]">
              <svg class="w-[15px] h-[15px] shrink-0" viewBox="0 0 15 15"><rect width="15" height="15" rx="1.500" fill="#f2a22c"/><path d="M4 3h8v2.500H7V7h4v2H7v3.500H4z" fill="#5a4a2c"/></svg>
              <span class="mt-[9px] [writing-mode:vertical-rl] whitespace-nowrap font-bold text-[10px] tracking-[0.500px] text-[#e4e4e4]">FUSION 360</span>
            </div>
            <div class="w-[25px] h-[136px] bg-[#464646] flex flex-col items-center pt-[18px]">
              <svg class="w-[15px] h-[15px] shrink-0" viewBox="0 0 15 15"><rect width="15" height="15" rx="1.500" fill="#f2a22c"/><path d="M4 3h8v2.500H7V7h4v2H7v3.500H4z" fill="#5a4a2c"/></svg>
              <span class="mt-[10px] [writing-mode:vertical-rl] whitespace-nowrap font-bold text-[10px] tracking-[0.200px] text-[#e4e4e4]">FUSION TEAM</span>
            </div>
          </div>
        </div>
        <div class="ml-[5px] w-[5px] h-[481px] rounded-full bg-[#808080]"></div>
      </div>
      <div class="mt-[6px] w-[867px] h-[5px] rounded-full bg-[#808080]"></div>
    </div>
  </div>

  <!-- status bar -->
  <div class="h-[25px] shrink-0 border-t border-[#808080] bg-[#eeeeee] flex items-center pl-[2px]">
    <span class="whitespace-nowrap">'C:\Users\nandi\Desktop\CDAC Handson\AC-DC 5V regulator.brd' saved. Left-click &amp; drag to define group (or left-click to start defining a group polygon)</span>
    <div class="ml-auto w-[25px] h-[20px] border-x border-[#ccc] flex items-center justify-center"><svg class="w-[19px] h-[18px]" viewBox="0 0 20 20"><path d="M13.500 1L0 11h8l-1.500 8L20 8h-8z" fill="#1faf52"/></svg></div>
    <div class="ml-[25px] w-[24px] h-[20px] border-l border-[#ccc] flex items-center pl-[4px]"><svg class="w-[19px] h-[18px]" viewBox="0 0 20 20"><use href="#wire"/><use href="#bolt" x="0" y="9" width="10" height="11"/></svg></div>
  </div>

  <!-- manufacturing preview dialog -->
  <div class="absolute left-[181px] top-[181px] w-[451px] h-[455px] bg-[#eeeeee] border-t-[5px] border-white shadow-[0_3px_12px_rgba(0,0,0,0.45)] flex flex-col">
    <div class="ml-[3px] h-[30px] flex items-start pt-px text-[#888]">
      <div class="w-[55px] h-[29px] border-b-[3px] border-[#2a93c9] pt-[2px] flex items-center justify-center text-[#1e8fd0]">Preview</div>
      <div class="ml-[4px] w-[44px] h-[27px] bg-[#d9d9d9] flex items-center justify-center">Board</div>
      <div class="ml-[4px] w-[36px] h-[27px] bg-[#d9d9d9] flex items-center justify-center">Drills</div>
    </div>
    <div class="mx-[2px] h-[379px] border border-[#d4d4d4] px-[7px]">
      <div class="flex gap-[10px] pt-[8px] pl-[2px]">
        <div class="size-[27px] rounded-[4px] border border-[#888] flex items-center justify-center"><svg class="w-[16px] h-[16px]" viewBox="0 0 20 20"><use href="#mag"/><path d="M4 5h8.500v6.500H4z" fill="#555"/></svg></div>
        <div class="size-[27px] rounded-[4px] border border-[#888] flex items-center justify-center"><svg class="w-[16px] h-[16px]" viewBox="0 0 20 20"><use href="#mag"/><path d="M5 8.200h6.400M8.200 5v6.400" stroke="#555" stroke-width="1.300"/></svg></div>
        <div class="size-[27px] -ml-px rounded-[4px] border border-[#888] flex items-center justify-center"><svg class="w-[16px] h-[16px]" viewBox="0 0 20 20"><use href="#mag"/><path d="M5 8.200h6.400" stroke="#555" stroke-width="1.300"/></svg></div>
        <div class="size-[27px] rounded-[4px] border border-[#888] flex items-center justify-center relative"><svg class="w-[17px] h-[17px]" viewBox="-9 -9 18 18" fill="none" stroke="#666"><circle r="7" stroke-width="2.600" stroke-dasharray="2.500 2.998" stroke-dashoffset="1.250"/><circle r="5.600" fill="#eee" stroke-width="1.100"/><circle r="2.500"/></svg><svg class="absolute right-px bottom-px w-[5px] h-[4px]"><use href="#dn"/></svg></div>
      </div>
      <div class="mt-[6px] w-[431px] h-[298px] bg-[#282828]">
        <svg class="block w-[431px] h-[298px]" viewBox="191 258 431 298" font-family="DejaVu Sans Light, DejaVu Sans, sans-serif" font-weight="200">
          <path d="M251.500 294.500L450 293.500l114-1-.5 30-1 90-1.500 102-150 1-162 .5 1-110z" fill="#1b7f12"/>
          <path d="M286 302.500L550 301q4 1 4.500 5l-1 90-.5 106q-1 4-4 4.500L286 508q-27-20-29-27l1-80 1-68q1-4 6-4 20-5 21-26.500z" fill="#378f00"/>
          <g fill="#1b7f12"><circle cx="269" cy="314.500" r="15"/><circle cx="269" cy="498" r="15"/><circle cx="529.500" cy="314.500" r="15"/><circle cx="529.500" cy="498" r="15"/><path d="M514.500 301h30v13h-30zM514.500 498h30v10h-30zM257 485h12v23h-12z"/></g>
          <path d="M284 372h18v50l-2 56h-14l-2-6z" fill="#1a7c10"/>
          <path d="M283 376v96l10 9M303 376v40l9 9v50M316 397v76M330 444h70l14 15 38-42M505 408v30M475 472h24l8-8" fill="none" stroke="#258408" stroke-width="2"/>
          <g fill="#282828" stroke="#5f7050" stroke-width=".6"><circle cx="269" cy="314.500" r="7.800"/><circle cx="269" cy="498" r="7.800"/><circle cx="529.500" cy="314.500" r="7.800"/><circle cx="529.500" cy="498" r="7.800"/></g>
          <g fill="#edf6e3" font-size="12.500" letter-spacing="0">
            <text x="274" y="339.500" textLength="40">INPUT</text>
            <text x="317" y="359" font-size="17.500" textLength="226" lengthAdjust="spacingAndGlyphs">5V AC−DC (ASSIGNMENT1)</text>
            <text x="338" y="384" textLength="16">D1</text><text x="336" y="460" textLength="17">D3</text>
            <text x="445" y="436" textLength="20">IC1</text><text x="459" y="492" textLength="16">C3</text><text x="472" y="484" textLength="51">OUTPUT</text>
            <text transform="translate(282 459) rotate(-90)" textLength="17">D4</text>
            <text transform="translate(319 451) rotate(-90)" textLength="15">C1</text>
            <text transform="translate(365 455) rotate(-90)" textLength="16">C2</text>
            <text transform="translate(402 441) rotate(-90)" textLength="17">D2</text>
          </g>
          <g fill="#fff"><path d="M324 394.500h15v5.500h-15zM371 394.500h15v5.500h-15zM342 387h3.500v20H342zM322 470h15v5.500h-15zM368 470h15v5.500h-15zM340 463h3.500v19H340zM292 411h5.500v15H292zM292 457h5.500v15H292zM285 450h19v5h-19zM412 394h6v14h-6zM412 440h6v15h-6zM406 433h19v5h-19zM444 389h82v10h-82zM322 432.500h14v2h-14zM322 437h14v2h-14zM369 432.500h14v2h-14zM369 437h14v2h-14zM453 464h2v13h-2zM457 464h2v13h-2z"/></g>
          <g fill="none" stroke="#e6f3da" stroke-width="1.300">
            <path d="M339 387h31.500v20H339zM337 463h31.500v19.500H337zM285 426h19.500v31H285zM405.500 408.500h20v32h-20zM446 398l1.500 21 2 3.500h71l2-3.500 1.500-21M438 461h36v19h-36z"/>
            <rect x="320.500" y="420" width="17" height="32" rx="2"/><rect x="366.500" y="417.500" width="19" height="37" rx="1.500"/>
            <path d="M352 397h14M362 391.500v11l-8-5.500zM354 391v12M350 472.500h14M360 467v11l-8-5.500zM352 467v12M294.500 430v17M289 433.500h11l-5.500 8zM288 442h13M415 412v16M409.500 415h11l-5.500 8zM409 423.500h12" stroke-width="1.100"/>
            <path d="M274.500 343h36v36.500h-36zM274.500 348.500h36M280 343v5M305 343v5M290 350v24h6v-24M287 376h12M487.500 434h35v37h-35zM487.500 465h35M502 438v26M506 438v26M500 438h9"/><circle cx="450.500" cy="417.500" r="2.200"/>
          </g>
          <g fill="#fbba12"><rect x="277" y="350.500" width="11.500" height="23" rx="5.700"/><rect x="296.500" y="350.500" width="11.500" height="23" rx="5.700"/><rect x="459" y="396.500" width="13" height="24" rx="6"/><rect x="478.500" y="396.500" width="13" height="24" rx="6"/><rect x="498" y="396.500" width="13" height="24" rx="6"/><rect x="489" y="440" width="12" height="23" rx="5.700"/><rect x="508" y="440" width="12" height="23" rx="5.700"/></g>
          <g fill="#2d2413"><circle cx="282.500" cy="361.500" r="3.600"/><circle cx="302" cy="361.500" r="3.600"/><circle cx="465.500" cy="408.500" r="4"/><circle cx="485" cy="408.500" r="4"/><circle cx="504.500" cy="408.500" r="4"/><circle cx="495" cy="451.500" r="3.800"/><circle cx="514" cy="451.500" r="3.800"/></g>
          <g fill="#2d2413" stroke="#f2b01c" stroke-width="2.600"><circle cx="315.500" cy="397" r="5.700"/><circle cx="393.500" cy="397" r="5.700"/><circle cx="294.500" cy="403" r="5.700"/><circle cx="294.500" cy="481" r="5.700"/><circle cx="313.500" cy="473" r="5.700"/><circle cx="391.500" cy="473" r="5.700"/><circle cx="415" cy="385.500" r="5.700"/><circle cx="415" cy="463" r="5.700"/></g>
          <g fill="#2d2413" stroke="#f2b01c" stroke-width="2.500"><circle cx="329.500" cy="426" r="4.600"/><circle cx="329.500" cy="445.500" r="4.600"/><circle cx="376" cy="426" r="4.600"/><circle cx="376" cy="445.500" r="4.600"/><circle cx="446" cy="471" r="4.600"/><circle cx="465.500" cy="471" r="4.600"/></g>
        </svg>
      </div>
      <div class="mt-[5px] w-[431px] flex items-center">
        <div class="w-[92px] h-[25px] bg-white border border-[#999] flex items-center justify-between pl-[5px] pr-[5px] tracking-[0.200px]">Top Side<svg class="w-[6px] h-[5px]"><use href="#dn"/></svg></div>
        <div class="ml-auto w-[75px] h-[25px] rounded-[4px] border border-[#888] bg-white flex items-center justify-center">Export DXF</div>
        <div class="ml-[5px] w-[87px] h-[25px] rounded-[4px] border border-[#2a93c9] bg-[#e0f4fc] flex items-center justify-center">Export Image</div>
        <div class="ml-[5px] w-[51px] h-[25px] rounded-[4px] border border-[#888] bg-white flex items-center justify-center">CAM...</div>
      </div>
    </div>
    <div class="flex items-center pl-[9px] pr-[8px] pt-px h-[41px]">
      <div class="size-[14px] rounded-[3px] border border-[#888] bg-white flex items-center justify-center"><svg class="w-[9px] h-[8px]" viewBox="0 0 9 8"><path d="M1 4l2.500 3L8 1" fill="none" stroke="#666" stroke-width="1.600"/></svg></div>
      <span class="ml-[5px]">Live Update</span>
      <div class="ml-auto w-[74px] h-[25px] rounded-[4px] border border-[#888] bg-white flex items-center justify-center">Close</div>
    </div>
  </div>
</div>
</body>
</html>
